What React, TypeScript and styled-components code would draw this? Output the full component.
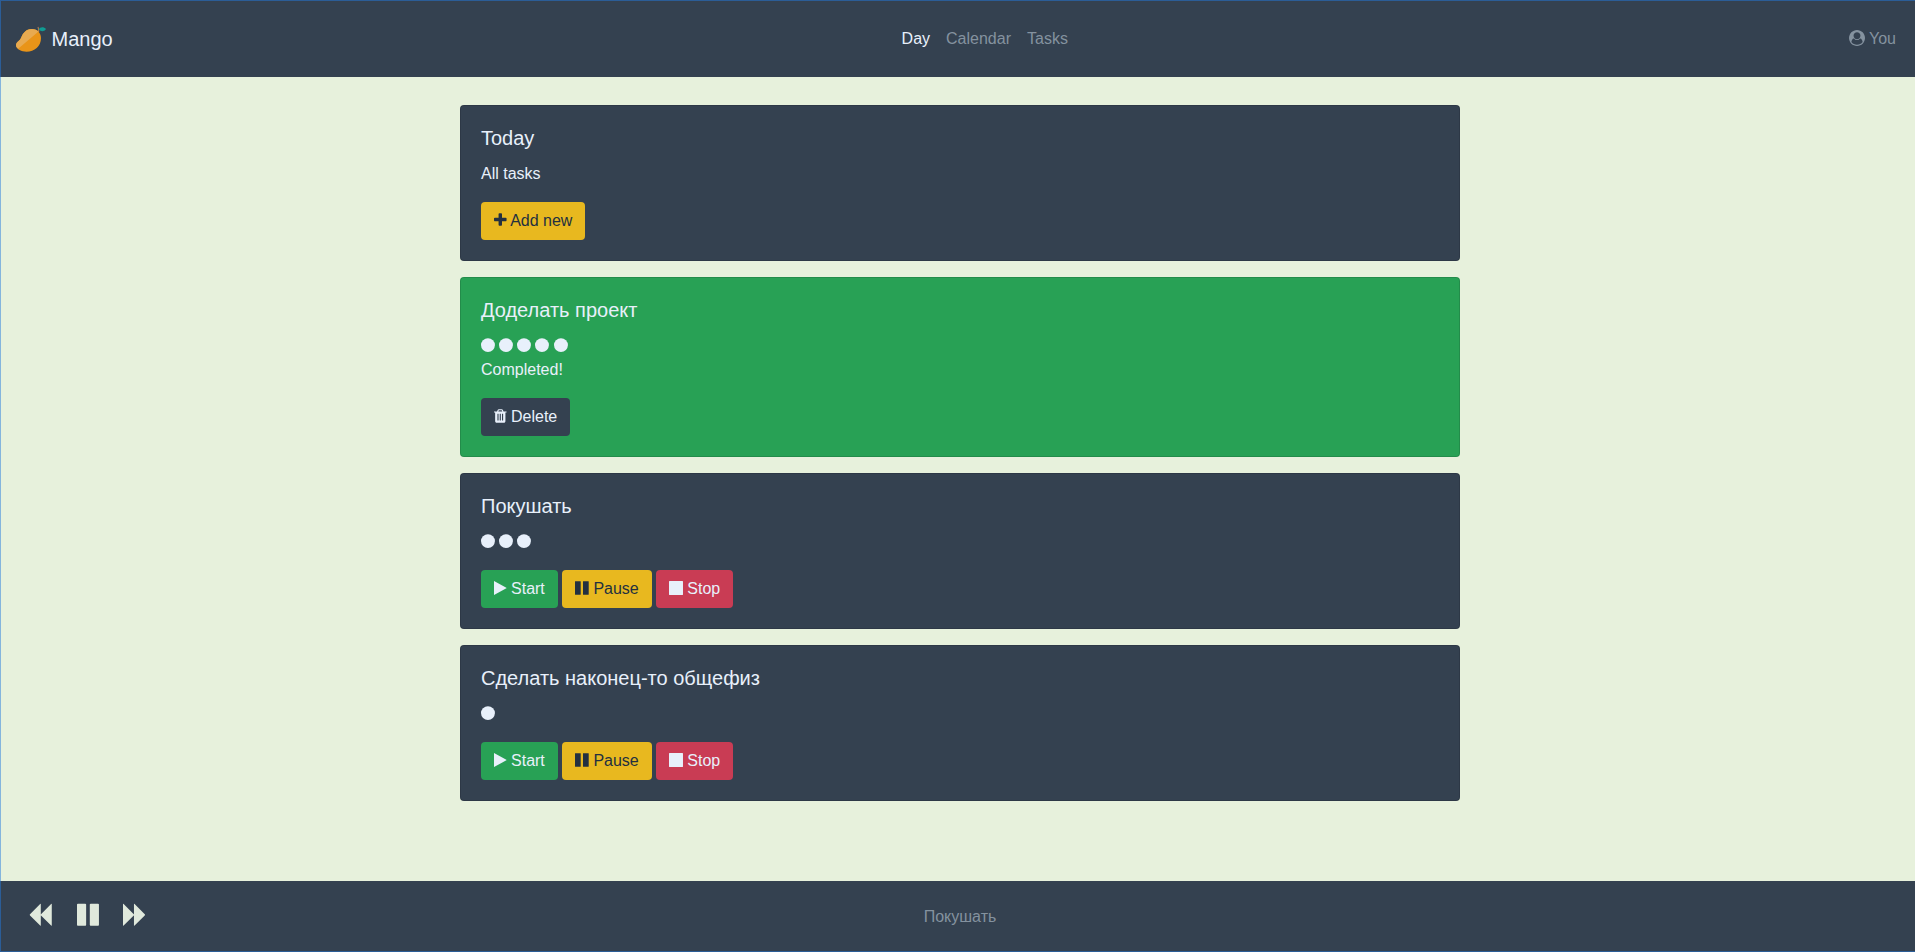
import React from "react";
import styled, { createGlobalStyle, css } from "styled-components";

const colors = {
  page: "#e7f1dc",
  dark: "#344150",
  light: "#e8f0fb",
  muted: "#84929f",
  green: "#28a155",
  yellow: "#e8b81f",
  red: "#c93c54",
  ink: "#233040",
};

const GlobalStyle = createGlobalStyle`
  *, *::before, *::after { box-sizing: border-box; }
  html, body { margin: 0; padding: 0; overflow: hidden; }
  body {
    font-family: "Liberation Sans", Arial, sans-serif;
    font-size: 16px;
    line-height: 24px;
    color: ${colors.light};
    background: ${colors.page};
  }
`;

const Page = styled.div`
  position: relative;
  display: flex;
  flex-direction: column;
  width: 1920px;
  height: 952px;
`;

const SelectionFrame = styled.div`
  position: absolute;
  inset: 0;
  border: 1px solid rgba(33, 122, 222, 0.5);
  pointer-events: none;
`;

const Header = styled.header`
  display: grid;
  grid-template-columns: 1fr auto 1fr;
  align-items: center;
  height: 77px;
  padding: 0 24px 0 16px;
  background: ${colors.dark};
`;

const Brand = styled.a`
  display: flex;
  align-items: center;
  gap: 5.5px;
  padding-top: 1px;
  font-size: 20px;
  line-height: 30px;
`;

const Nav = styled.nav`
  display: flex;
  gap: 16px;
  margin-left: 57.5px;
`;

const NavLink = styled.a<{ $active?: boolean }>`
  color: ${(p) => (p.$active ? colors.light : colors.muted)};
`;

const Account = styled(NavLink)`
  justify-self: end;
`;

const Main = styled.main`
  flex: 1;
  display: flex;
  flex-direction: column;
  gap: 16px;
  width: 1000px;
  margin: 0 auto;
  padding-top: 28px;
`;

const Card = styled.section<{ $done?: boolean }>`
  padding: 20px;
  border: 1px solid rgba(0, 0, 0, 0.125);
  border-radius: 4px;
  background: ${(p) => (p.$done ? colors.green : colors.dark)};
`;

const CardTitle = styled.h5`
  margin: 0 0 12px;
  font-size: 20px;
  font-weight: 400;
  line-height: 24px;
`;

const CardText = styled.p`
  margin: 0 0 16px;
`;

const Actions = styled.div`
  display: flex;
  gap: 4.45px;
`;

type Tone = "start" | "pause" | "stop" | "dark";

const tones = {
  start: css`background: ${colors.green};`,
  pause: css`background: ${colors.yellow}; color: ${colors.ink};`,
  stop: css`background: ${colors.red};`,
  dark: css`background: ${colors.dark};`,
};

const Button = styled.button<{ $tone: Tone }>`
  height: 38px;
  padding: 0 13px;
  border: 0;
  border-radius: 4px;
  font: inherit;
  color: ${colors.light};
  white-space: nowrap;
  ${(p) => tones[p.$tone]}
`;

const Footer = styled.footer`
  display: grid;
  grid-template-columns: 1fr auto 1fr;
  align-items: center;
  height: 71px;
  padding: 0 28.4px;
  background: ${colors.dark};
`;

const Controls = styled.div`
  display: flex;
  gap: 24.6px;
  margin-top: -3px;
  color: #e0e9dc;
`;

const NowPlaying = styled.span`
  color: ${colors.muted};
`;

const Glyph = styled.svg<{ $block?: boolean }>`
  display: ${(p) => (p.$block ? "block" : "inline-block")};
  overflow: visible;
  vertical-align: -2.29px;
  fill: currentColor;
`;

const glyphs = {
  plus: { x: 192, w: 1408, d: "M1600 736v192q0 40-28 68t-68 28h-416v416q0 40-28 68t-68 28h-192q-40 0-68-28t-28-68v-416h-416q-40 0-68-28t-28-68v-192q0-40 28-68t68-28h416v-416q0-40 28-68t68-28h192q40 0 68 28t28 68v416h416q40 0 68 28t28 68z" },
  trash: { x: 192, w: 1408, d: "M704 1376v-704q0-14-9-23t-23-9h-64q-14 0-23 9t-9 23v704q0 14 9 23t23 9h64q14 0 23-9t9-23zm256 0v-704q0-14-9-23t-23-9h-64q-14 0-23 9t-9 23v704q0 14 9 23t23 9h64q14 0 23-9t9-23zm256 0v-704q0-14-9-23t-23-9h-64q-14 0-23 9t-9 23v704q0 14 9 23t23 9h64q14 0 23-9t9-23zm-544-992h448l-48-117q-7-9-17-11h-317q-10 2-17 11zm928 32v64q0 14-9 23t-23 9h-96v948q0 83-47 143.5t-113 60.5h-832q-66 0-113-58.5t-47-141.5v-952h-96q-14 0-23-9t-9-23v-64q0-14 9-23t23-9h309l70-167q15-37 54-63t79-26h320q40 0 79 26t54 63l70 167h309q14 0 23 9t9 23z" },
  play: { x: 192, w: 1408, d: "M1576 927l-1328 738q-23 13-39.5 3t-16.5-36v-1472q0-26 16.5-36t39.5 3l1328 738q23 13 23 31t-23 31z" },
  pause: { x: 128, w: 1536, d: "M1664 192v1408q0 26-19 45t-45 19h-512q-26 0-45-19t-19-45v-1408q0-26 19-45t45-19h512q26 0 45 19t19 45zm-896 0v1408q0 26-19 45t-45 19h-512q-26 0-45-19t-19-45v-1408q0-26 19-45t45-19h512q26 0 45 19t19 45z" },
  stop: { x: 128, w: 1536, d: "M1696 176v1440q0 26-19 45t-45 19h-1440q-26 0-45-19t-19-45v-1440q0-26 19-45t45-19h1440q26 0 45 19t19 45z" },
  circle: { x: 128, w: 1536, d: "M1688 908a780 780 0 1 1-1560 0a780 780 0 1 1 1560 0z" },
  user: { x: 0, w: 1792, d: "M1523 1339q-22-155-87.5-257.5t-184.5-118.5q-67 74-159.5 115.5t-195.5 41.5-195.5-41.5-159.5-115.5q-119 16-184.5 118.5t-87.5 257.5q106 150 271 237.5t356 87.5 356-87.5 271-237.5zm-243-699q0-159-112.5-271.5t-271.5-112.5-271.5 112.5-112.5 271.5 112.5 271.5 271.5 112.5 271.5-112.5 112.5-271.5zm512 256q0 182-71 347.5t-190.5 286-285.5 191.5-349 71q-182 0-348-71t-286-191-191-286-71-348 71-348 191-286 286-191 348-71 348 71 286 191 191 286 71 348z" },
  backward: { x: 64, w: 1664, d: "M1683 141q19-19 32-13t13 32v1472q0 26-13 32t-32-13l-710-710q-9-9-13-19v710q0 26-13 32t-32-13l-710-710q-19-19-19-45t19-45l710-710q19-19 32-13t13 32v710q4-10 13-19z" },
  forward: { x: 64, w: 1664, d: "M109 1651q-19 19-32 13t-13-32v-1472q0-26 13-32t32 13l710 710q8 8 13 19v-710q0-26 13-32t32 13l710 710q19 19 19 45t-19 45l-710 710q-19 19-32 13t-13-32v-710q-5 10-13 19z" },
};

function Icon({ name, size = 16, block }: { name: keyof typeof glyphs; size?: number; block?: boolean }) {
  const g = glyphs[name];
  return (
    <Glyph $block={block} width={(g.w / 1792) * size} height={size} viewBox={`${g.x} 0 ${g.w} 1792`} aria-hidden>
      <path d={g.d} />
    </Glyph>
  );
}

function Mango() {
  return (
    <svg width="30" height="30" viewBox="0 0 30 30" aria-hidden>
      <path d="M22 3C23 4.8 22.8 6.5 22.6 8" fill="none" stroke="#a5784f" strokeWidth="1.3" />
      <path d="M22.8 5.2C24 2.6 28 2.4 30 5C28 7.9 24.6 7.9 22.8 5.2Z" fill="#109c93" />
      <path d="M0 20.6C0.6 17.8 3.8 16.8 5.2 13.4C7 9 10 5 15.6 4.9C20.4 4.8 25 8 25 14C25 22.5 18.5 27.7 10.5 27.7C5 27.7-0.6 24.6 0 20.6Z" fill="#e99418" />
      <path d="M0 20.6C0.6 17.8 3.8 16.8 5.2 13.4C7 9 10 5 15.6 4.9C18.4 4.8 20.8 5.7 22.5 7.4L2.2 24.8C0.6 23.6-0.2 22.2 0 20.6Z" fill="#e8aa50" />
    </svg>
  );
}

function Dots({ count }: { count: number }) {
  return (
    <>
      {Array.from({ length: count }, (_, i) => (
        <React.Fragment key={i}>
          <Icon name="circle" />{" "}
        </React.Fragment>
      ))}
    </>
  );
}

function PendingTask({ title, count }: { title: string; count: number }) {
  return (
    <Card>
      <CardTitle>{title}</CardTitle>
      <CardText><Dots count={count} /></CardText>
      <Actions>
        <Button $tone="start"><Icon name="play" /> Start</Button>
        <Button $tone="pause"><Icon name="pause" /> Pause</Button>
        <Button $tone="stop"><Icon name="stop" /> Stop</Button>
      </Actions>
    </Card>
  );
}

export default function App() {
  return (
    <>
      <GlobalStyle />
      <Page>
        <Header>
          <Brand><Mango />Mango</Brand>
          <Nav>
            <NavLink $active>Day</NavLink>
            <NavLink>Calendar</NavLink>
            <NavLink>Tasks</NavLink>
          </Nav>
          <Account><Icon name="user" /> You</Account>
        </Header>
        <Main>
          <Card>
            <CardTitle>Today</CardTitle>
            <CardText>All tasks</CardText>
            <Actions>
              <Button $tone="pause"><Icon name="plus" /> Add new</Button>
            </Actions>
          </Card>
          <Card $done>
            <CardTitle>Доделать проект</CardTitle>
            <CardText><Dots count={5} /><br />Completed!</CardText>
            <Actions>
              <Button $tone="dark"><Icon name="trash" /> Delete</Button>
            </Actions>
          </Card>
          <PendingTask title="Покушать" count={3} />
          <PendingTask title="Сделать наконец-то общефиз" count={1} />
        </Main>
        <Footer>
          <Controls>
            <Icon name="backward" size={25.6} block />
            <Icon name="pause" size={25.6} block />
            <Icon name="forward" size={25.6} block />
          </Controls>
          <NowPlaying>Покушать</NowPlaying>
        </Footer>
        <SelectionFrame />
      </Page>
    </>
  );
}
